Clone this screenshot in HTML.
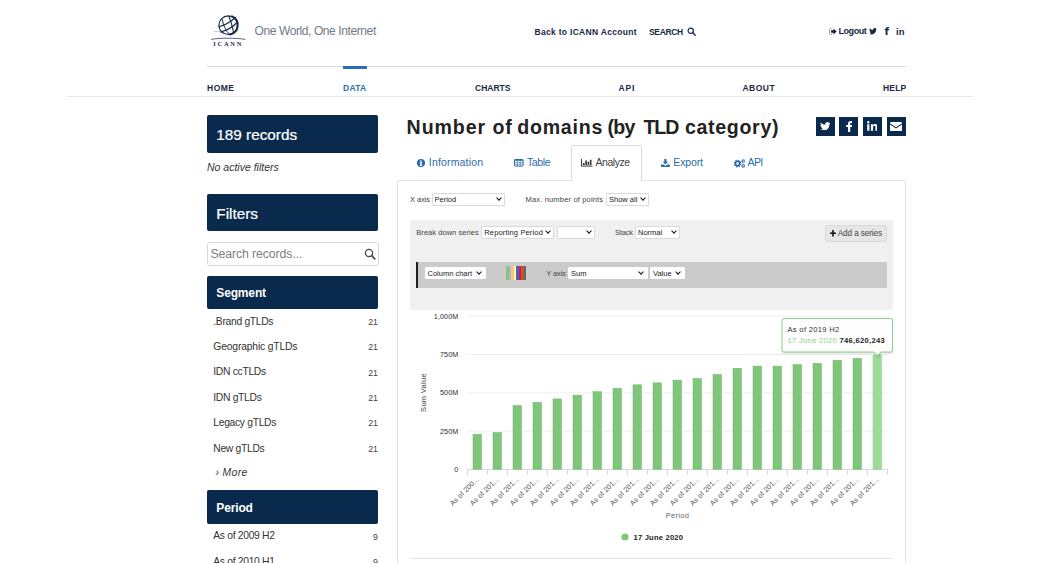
<!DOCTYPE html>
<html lang="en">
<head>
<meta charset="utf-8">
<title>Number of domains (by TLD category)</title>
<style>
*{box-sizing:border-box;margin:0;padding:0}
html,body{width:1040px;height:563px;overflow:hidden;background:#fff}
body{font-family:"Liberation Sans",sans-serif;color:#333;position:relative}
.abs{position:absolute;white-space:nowrap}
.line{position:absolute;height:1px;background:#dcdcdc}
.nav{position:absolute;top:83.2px;font-size:8.5px;font-weight:bold;letter-spacing:.9px;color:#1a2a44;line-height:10px;white-space:nowrap}
.top{position:absolute;top:26.5px;font-size:8.5px;font-weight:bold;color:#1a2a44;line-height:10px;white-space:nowrap;letter-spacing:.3px}
.box{position:absolute;left:207px;width:171.3px;background:#0a2a4d;color:#fff;border-radius:2px;white-space:nowrap}
.box span{position:absolute;left:9.3px}
.li{position:absolute;left:213.3px;letter-spacing:-.3px;font-size:10.3px;color:#333;line-height:12px;white-space:nowrap}
.ct{position:absolute;right:662.5px;font-size:8.8px;letter-spacing:-.3px;color:#444;line-height:10px;text-align:right}
.tab{position:absolute;top:155.8px;font-size:10.5px;color:#2a6bb0;line-height:13px;white-space:nowrap}
.lbl{position:absolute;font-size:7.5px;color:#444;line-height:9px;white-space:nowrap}
.sel{position:absolute;height:12.5px;background:#fff;border:1px solid #dadada;border-radius:1px;font-size:7.5px;line-height:11.2px;color:#222;padding-left:2px;white-space:nowrap;overflow:hidden}
.sel:after{content:"";position:absolute;right:3.2px;top:2.2px;width:3px;height:3px;border-right:1.6px solid #111;border-bottom:1.6px solid #111;transform:rotate(45deg)}
.sq{position:absolute;top:116.8px;width:18.8px;height:18.8px;background:#0a2a4d}
</style>
</head>
<body>
<!-- HEADER -->
<div id="logo" class="abs" style="left:205px;top:8px;width:50px;height:45px">
<svg width="50" height="45" viewBox="0 0 50 45">
<g fill="none" stroke="#1b2b50" stroke-linecap="round">
<circle cx="23.2" cy="17.2" r="9.3" stroke-width="1.2"/>
<path d="M27 8.300A9.600 9.600 0 0 1 25 26.500" stroke-width="2"/>
<path d="M13.800 18.800C19 17.500 26 13.500 30.500 9.500" stroke-width="1.100"/>
<path d="M15.500 24C21 22.500 28 19 32 14.500" stroke-width="1.200"/>
<path d="M17.300 11.500C17.800 16 20.500 22.500 24.500 26.500" stroke-width="1"/>
<path d="M23.800 8.500C25.500 12 27.500 19 28.600 24.800" stroke-width="1.100"/>
<path d="M9.500 23.500C11.500 23.800 13.500 23.500 15 23" stroke-width=".8" stroke-opacity=".35"/>
<path d="M6.500 31.300C15 29.800 31 29.800 40 31.300" stroke-width=".9" stroke-opacity=".8"/>
</g>
<text x="23.200" y="37.500" text-anchor="middle" font-family="Liberation Serif,serif" font-weight="bold" font-size="6.4" letter-spacing="1.75" fill="#1b2b50">ICANN</text>
</svg>
</div>
<div class="abs" id="tag" style="left:254.5px;top:23.3px;font-size:12px;line-height:16px;color:#737a85;letter-spacing:-.4px">One World, One Internet</div>
<div class="top" style="left:534.5px">Back to ICANN Account</div>
<div class="top" style="left:649px;letter-spacing:-.35px">SEARCH</div>
<svg class="abs" style="left:687px;top:27.300px" width="9.300" height="9.300" viewBox="0 0 10 10"><circle cx="4" cy="4" r="2.8" fill="none" stroke="#1a2a44" stroke-width="1.3"/><path d="M6 6 L8.8 8.8" stroke="#1a2a44" stroke-width="1.5" stroke-linecap="round"/></svg>
<svg class="abs" style="left:828.500px;top:27.600px" width="8" height="7" viewBox="0 0 8 6.500" preserveAspectRatio="none"><path d="M2.800 .6H1.500Q.5 .6 .5 1.600V4.900Q.5 5.900 1.500 5.900H2.800" fill="none" stroke="#8f97a6" stroke-width=".9"/><path d="M2.100 2.200H4.500V.5L7.700 3.250L4.500 6V4.300H2.100Z" fill="#14233f"/></svg>
<div class="top" style="left:838.5px;top:25.500px;font-size:9px;letter-spacing:-.44px">Logout</div>
<svg class="abs" style="left:869px;top:28px" width="8" height="6.600" viewBox="0 0 24 20"><path fill="#1a2a44" d="M24 2.4c-.9.4-1.8.7-2.8.8 1-.6 1.8-1.600 2.200-2.700-1 .6-2 1-3.100 1.200C19.400.7 18.100.1 16.700.1c-2.700 0-4.900 2.200-4.900 4.900 0 .4 0 .8.1 1.100C7.700 5.900 4.100 3.900 1.700.9c-.4.700-.7 1.600-.7 2.500 0 1.700.9 3.200 2.200 4.100-.8 0-1.600-.2-2.200-.6v.1c0 2.400 1.700 4.400 3.900 4.800-.4.100-.8.200-1.300.2-.3 0-.6 0-.9-.1.600 2 2.400 3.400 4.600 3.400-1.700 1.300-3.800 2.100-6.100 2.100-.4 0-.8 0-1.200-.1 2.200 1.400 4.800 2.200 7.500 2.200 9.100 0 14-7.500 14-14v-.6c1-.7 1.800-1.600 2.500-2.500z"/></svg>
<div class="top" style="left:884.5px;top:26px;font-size:10.5px;font-family:'DejaVu Sans',sans-serif">f</div>
<div class="top" style="left:896px;font-size:9.5px;letter-spacing:0;top:26.500px">in</div>

<div class="line" style="left:207px;top:66px;width:699px"></div>
<div class="abs" style="left:343px;top:66px;width:24px;height:3px;background:#2a6ebb"></div>
<div class="nav" style="left:207px;letter-spacing:.5px">HOME</div>
<div class="nav" style="left:343px;color:#2a6ebb;letter-spacing:.3px">DATA</div>
<div class="nav" style="left:475px;letter-spacing:0">CHARTS</div>
<div class="nav" style="left:618.5px;letter-spacing:.8px">API</div>
<div class="nav" style="left:742.5px;letter-spacing:.47px">ABOUT</div>
<div class="nav" style="left:883px;letter-spacing:.2px">HELP</div>
<div class="line" style="left:67px;top:96px;width:906px;background:#e6e6e6"></div>

<!-- SIDEBAR -->
<div class="box" style="top:115.4px;height:37.400px;font-size:15.3px;line-height:39.500px;-webkit-text-stroke:.22px #fff"><span>189 records</span></div>
<div class="abs" style="left:207px;top:160.700px;font-size:10.5px;line-height:12px;font-style:italic;color:#333">No active filters</div>
<div class="box" style="top:194.100px;height:37.400px;font-size:15.3px;line-height:39.500px;-webkit-text-stroke:.22px #fff"><span>Filters</span></div>
<div class="abs" style="left:207px;top:242px;width:171.500px;height:24px;letter-spacing:-.12px;border:1px solid #d8d8d8;border-radius:3px;font-size:12.3px;line-height:23.500px;color:#808080;padding-left:2.500px">Search records...</div>
<svg class="abs" style="left:364px;top:248px" width="12" height="12" viewBox="0 0 12 12"><circle cx="5" cy="5" r="3.600" fill="none" stroke="#4a4a4a" stroke-width="1.300"/><path d="M7.700 7.700 L10.800 10.800" stroke="#4a4a4a" stroke-width="1.700" stroke-linecap="round"/></svg>
<div class="box" style="top:275.600px;height:33.500px;font-size:12px;line-height:35.300px;font-weight:bold;letter-spacing:-.15px"><span>Segment</span></div>
<div class="li" style="top:315.5px">.Brand gTLDs</div><div class="ct" style="top:316.8px">21</div>
<div class="li" style="top:340.9px;letter-spacing:-.15px">Geographic gTLDs</div><div class="ct" style="top:342.2px">21</div>
<div class="li" style="top:366.3px">IDN ccTLDs</div><div class="ct" style="top:367.6px">21</div>
<div class="li" style="top:391.7px">IDN gTLDs</div><div class="ct" style="top:393.0px">21</div>
<div class="li" style="top:417.1px">Legacy gTLDs</div><div class="ct" style="top:418.4px">21</div>
<div class="li" style="top:442.5px">New gTLDs</div><div class="ct" style="top:443.8px">21</div>
<div class="li" style="left:215.5px;top:467.0px;font-style:italic;letter-spacing:.4px">› More</div>
<div class="box" style="top:490.3px;height:33.500px;font-size:12px;line-height:36.300px;font-weight:bold;letter-spacing:-.15px"><span>Period</span></div>
<div class="li" style="top:530.3px">As of 2009 H2</div><div class="ct" style="top:531.6px">9</div>
<div class="li" style="top:555.7px">As of 2010 H1</div><div class="ct" style="top:557.0px">9</div>

<!-- MAIN -->
<div class="abs" id="title" style="left:406.2px;top:113.3px;width:380px;height:28px;font-size:19.6px;line-height:28px;font-weight:bold;color:#222"><span class="abs" style="left:0.4px;letter-spacing:0.91px">Number </span><span class="abs" style="left:86.4px;letter-spacing:0.69px">of </span><span class="abs" style="left:111.0px;letter-spacing:0.76px">domains </span><span class="abs" style="left:201.4px;letter-spacing:-.8px">(by </span><span class="abs" style="left:237.3px;letter-spacing:-1.1px">TLD </span><span class="abs" style="left:278.7px;letter-spacing:0.68px">category) </span></div>
<div class="sq" style="left:815.800px"><svg class="abs" style="left:3.800px;top:4.800px" width="10.600" height="8.900" viewBox="0 0 24 20" preserveAspectRatio="none"><path fill="#fff" d="M24 2.4c-.9.4-1.800.7-2.800.8 1-.6 1.800-1.600 2.200-2.700-1 .6-2 1-3.100 1.200C19.400.7 18.100.1 16.700.1c-2.700 0-4.900 2.200-4.900 4.900 0 .4 0 .8.100 1.100C7.700 5.900 4.100 3.900 1.700.9c-.4.700-.7 1.600-.7 2.500 0 1.700.9 3.200 2.200 4.100-.8 0-1.600-.2-2.200-.6v.1c0 2.400 1.700 4.400 3.900 4.800-.4.100-.8.200-1.300.2-.3 0-.6 0-.9-.1.600 2 2.400 3.400 4.600 3.400-1.700 1.300-3.800 2.100-6.100 2.100-.4 0-.8 0-1.200-.1 2.200 1.400 4.800 2.200 7.500 2.200 9.100 0 14-7.500 14-14v-.6c1-.7 1.800-1.600 2.500-2.500z"/></svg></div>
<div class="sq" style="left:839.100px"><svg class="abs" style="left:6.500px;top:4px" width="6.500" height="11" viewBox="0 0 6.500 11"><path fill="#fff" d="M4.200 11V6.100h1.700l.3-2H4.200V2.900c0-.6.200-1 1-1h1.100V.1C6.100.1 5.400 0 4.700 0 3.100 0 2 1 2 2.700v1.400H.2v2H2V11z"/></svg></div>
<div class="sq" style="left:862.900px"><svg class="abs" style="left:3.800px;top:4.300px" width="10.600" height="9.700" viewBox="0 0 10.600 9.700"><path fill="#fff" d="M.2 3.200h2.200v6.500H.2zM1.300 0a1.250 1.250 0 1 1 0 2.500A1.250 1.250 0 0 1 1.300 0zM3.900 3.200H6v.9c.4-.7 1.200-1.100 2.200-1.100 2 0 2.400 1.300 2.400 3v3.700H8.400V6.400c0-.8 0-1.700-1.100-1.700S6.100 5.500 6.100 6.300v3.400H3.900z"/></svg></div>
<div class="sq" style="left:886.900px"><svg class="abs" style="left:3.400px;top:5.300px" width="12" height="9.200" viewBox="0 0 12 9.200"><path fill="#fff" d="M1 0h10a1 1 0 0 1 1 1v.3L6 5.200 0 1.300V1a1 1 0 0 1 1-1zM0 2.600l6 3.900 6-3.900v5.600a1 1 0 0 1-1 1H1a1 1 0 0 1-1-1z"/></svg></div>

<!-- tabs -->
<div class="abs" style="left:397px;top:179.500px;width:509px;height:400px;border:1px solid #e1e1e1;border-radius:2px"></div>
<div class="abs" style="left:570.500px;top:145px;width:71px;height:36px;border:1px solid #dcdcdc;border-bottom:0;background:#fff;border-radius:2px 2px 0 0"></div>
<svg class="abs" style="left:417px;top:158.800px" width="8" height="8" viewBox="0 0 8 8"><circle cx="4" cy="4" r="4" fill="#2a6bb0"/><rect x="3.300" y="3.300" width="1.500" height="3.200" fill="#fff"/><rect x="2.800" y="3.300" width="1.500" height=".8" fill="#fff"/><rect x="2.700" y="5.900" width="2.700" height=".8" fill="#fff"/><circle cx="4" cy="2" r=".85" fill="#fff"/></svg>
<div class="tab" style="left:428.800px;letter-spacing:.17px">Information</div>
<svg class="abs" style="left:514.300px;top:159.300px" width="9.600" height="7.600" viewBox="0 0 9.600 7.600"><rect x=".5" y=".5" width="8.600" height="6.600" rx=".6" fill="none" stroke="#2a6bb0" stroke-width="1"/><rect x=".5" y=".5" width="8.600" height="1.300" fill="#2a6bb0"/><path d="M.5 3.600H9.100M.5 5.300H9.100" stroke="#2a6bb0" stroke-width=".55" fill="none"/><path d="M3.400 1.500V7M6.200 1.500V7" stroke="#2a6bb0" stroke-width=".6" fill="none"/></svg>
<div class="tab" style="left:527px;letter-spacing:-.4px">Table</div>
<svg class="abs" style="left:581.300px;top:159.200px" width="11.400" height="7.600" viewBox="0 0 11.400 7.600"><path d="M.5 0V7.100H11.400" fill="none" stroke="#333" stroke-width="1"/><path d="M2 6.100V3.900H3.600V6.100zM4.300 6.100V1.400H5.900V6.100zM6.600 6.100V2.800H8.200V6.100zM8.900 6.100V.7H10.500V6.100z" fill="#333"/></svg>
<div class="tab" style="left:595.500px;color:#444;letter-spacing:-.45px">Analyze</div>
<svg class="abs" style="left:661.300px;top:158.800px" width="8.800" height="8" viewBox="0 0 8.800 8"><path d="M3.300 0H5.500V2.800H7.100L4.400 5.600 1.700 2.800H3.300zM0 5.400H2.400L4.400 7 6.400 5.400H8.800V8H0z" fill="#2a6bb0"/></svg>
<div class="tab" style="left:673.300px;letter-spacing:-.15px">Export</div>
<svg class="abs" style="left:733.500px;top:158.500px" width="11.500" height="9" viewBox="0 0 11.500 9"><g fill="none" stroke="#2a6bb0"><circle cx="3.600" cy="4.600" r="2.200" stroke-width="1.700"/><circle cx="3.600" cy="4.600" r="3.300" stroke-width="1.200" stroke-dasharray="1.300 1.290"/><circle cx="9.300" cy="2.100" r="1.100" stroke-width="1"/><circle cx="9.300" cy="2.100" r="1.800" stroke-width=".7" stroke-dasharray=".8 .61"/><circle cx="9.300" cy="6.900" r="1.100" stroke-width="1"/><circle cx="9.300" cy="6.900" r="1.800" stroke-width=".7" stroke-dasharray=".8 .61"/></g></svg>
<div class="tab" style="left:747.500px;letter-spacing:-.6px">API</div>

<!-- controls -->
<div class="lbl" style="left:410px;top:194.500px;letter-spacing:-.1px">X axis</div>
<div class="sel" style="left:431.500px;top:193px;width:73.500px">Period</div>
<div class="lbl" style="left:525.500px;top:194.500px;letter-spacing:.17px">Max. number of points</div>
<div class="sel" style="left:606px;top:193px;width:43px">Show all</div>

<div class="abs" style="left:410px;top:220px;width:483px;height:90px;background:#f0f0f0"></div>
<div class="lbl" style="left:416.300px;top:227.800px;letter-spacing:.04px">Break down series</div>
<div class="sel" style="left:481.300px;top:226px;width:73.200px;letter-spacing:.15px">Reporting Period</div>
<div class="sel" style="left:557px;top:226px;width:38px"></div>
<div class="lbl" style="left:615px;top:227.800px;letter-spacing:-.2px">Stack</div>
<div class="sel" style="left:635px;top:226px;width:45px">Normal</div>
<div class="abs" style="left:824.500px;top:225px;width:62.500px;height:16.500px;background:#e6e6e6;border:1px solid #d9d9d9;border-radius:2px"></div>
<svg class="abs" style="left:829.500px;top:230.300px" width="6" height="6.500" viewBox="0 0 6 6.500"><path d="M3 0V6.500M0 3.250H6" stroke="#111" stroke-width="1.600" fill="none"/></svg>
<div class="abs" id="addser" style="left:837.700px;top:229px;font-size:8.2px;line-height:10px;color:#444;letter-spacing:-.1px">Add a series</div>

<div class="abs" style="left:415.500px;top:262px;width:471.500px;height:25.500px;background:#cbcbcb;border-left:2.500px solid #222"></div>
<div class="sel" style="left:424.500px;top:266.800px;width:61px;border-color:#fff">Column chart</div>
<div class="abs" style="left:506px;top:266.200px;width:20px;height:13.800px;display:flex">
<i style="flex:1;background:#7fc97f"></i><i style="flex:1;background:#beaed4"></i><i style="flex:1;background:#fdc086"></i><i style="flex:1;background:#ffff99"></i><i style="flex:1;background:#386cb0"></i><i style="flex:1;background:#f0027f"></i><i style="flex:1;background:#bf5b17"></i><i style="flex:1;background:#666666"></i>
</div>
<div class="lbl" style="left:546.300px;top:268.600px;letter-spacing:-.1px">Y axis</div>
<div class="sel" style="left:568px;top:266.800px;width:79.500px;border-color:#fff">Sum</div>
<div class="sel" style="left:650px;top:266.800px;width:34.500px;border-color:#fff">Value</div>

<!-- CHART -->
<svg class="abs" id="chart" style="left:410px;top:310px" width="483" height="253" viewBox="0 0 483 253" font-family="Liberation Sans,sans-serif">
<text x="48.5" y="162.2" text-anchor="end" font-size="7.2" fill="#2a2a2a" letter-spacing=".15">0</text>
<path d="M57 121.2H477" stroke="#eeeeee" stroke-width="1"/>
<text x="48.5" y="123.8" text-anchor="end" font-size="7.2" fill="#2a2a2a" letter-spacing=".15">250M</text>
<path d="M57 82.8H477" stroke="#eeeeee" stroke-width="1"/>
<text x="48.5" y="85.4" text-anchor="end" font-size="7.2" fill="#2a2a2a" letter-spacing=".15">500M</text>
<path d="M57 44.4H477" stroke="#eeeeee" stroke-width="1"/>
<text x="48.5" y="47.0" text-anchor="end" font-size="7.2" fill="#2a2a2a" letter-spacing=".15">750M</text>
<path d="M57 6.0H477" stroke="#eeeeee" stroke-width="1"/>
<text x="48.5" y="8.6" text-anchor="end" font-size="7.2" fill="#2a2a2a" letter-spacing=".15">1,000M</text>
<path d="M57 159.5H477" stroke="#d3d9e8" stroke-width="1"/>
<path d="M57.5 159v6M77.5 159v6M97.5 159v6M117.5 159v6M137.5 159v6M157.5 159v6M177.5 159v6M197.5 159v6M217.5 159v6M237.5 159v6M257.5 159v6M277.5 159v6M297.5 159v6M317.5 159v6M337.5 159v6M357.5 159v6M377.5 159v6M397.5 159v6M417.5 159v6M437.5 159v6M457.5 159v6M477.5 159v6" stroke="#d3d9e8" stroke-width="1" fill="none"/>
<rect x="63.00" y="124.3" width="8.5" height="35.0" fill="#7fc67a" stroke="#72b96d" stroke-width=".5"/>
<rect x="83.00" y="122.4" width="8.5" height="36.9" fill="#7fc67a" stroke="#72b96d" stroke-width=".5"/>
<rect x="103.00" y="95.5" width="8.5" height="63.8" fill="#7fc67a" stroke="#72b96d" stroke-width=".5"/>
<rect x="123.00" y="92.4" width="8.5" height="66.9" fill="#7fc67a" stroke="#72b96d" stroke-width=".5"/>
<rect x="143.00" y="88.9" width="8.5" height="70.4" fill="#7fc67a" stroke="#72b96d" stroke-width=".5"/>
<rect x="163.00" y="85.1" width="8.5" height="74.2" fill="#7fc67a" stroke="#72b96d" stroke-width=".5"/>
<rect x="183.00" y="81.6" width="8.5" height="77.7" fill="#7fc67a" stroke="#72b96d" stroke-width=".5"/>
<rect x="203.00" y="78.3" width="8.5" height="81.0" fill="#7fc67a" stroke="#72b96d" stroke-width=".5"/>
<rect x="223.00" y="74.8" width="8.5" height="84.5" fill="#7fc67a" stroke="#72b96d" stroke-width=".5"/>
<rect x="243.00" y="72.8" width="8.5" height="86.5" fill="#7fc67a" stroke="#72b96d" stroke-width=".5"/>
<rect x="263.00" y="70.1" width="8.5" height="89.2" fill="#7fc67a" stroke="#72b96d" stroke-width=".5"/>
<rect x="283.00" y="68.5" width="8.5" height="90.8" fill="#7fc67a" stroke="#72b96d" stroke-width=".5"/>
<rect x="303.00" y="64.4" width="8.5" height="94.9" fill="#7fc67a" stroke="#72b96d" stroke-width=".5"/>
<rect x="323.00" y="58.3" width="8.5" height="101.0" fill="#7fc67a" stroke="#72b96d" stroke-width=".5"/>
<rect x="343.00" y="56.1" width="8.5" height="103.2" fill="#7fc67a" stroke="#72b96d" stroke-width=".5"/>
<rect x="363.00" y="56.1" width="8.5" height="103.2" fill="#7fc67a" stroke="#72b96d" stroke-width=".5"/>
<rect x="383.00" y="54.5" width="8.5" height="104.8" fill="#7fc67a" stroke="#72b96d" stroke-width=".5"/>
<rect x="403.00" y="53.3" width="8.5" height="106.0" fill="#7fc67a" stroke="#72b96d" stroke-width=".5"/>
<rect x="423.00" y="50.2" width="8.5" height="109.1" fill="#7fc67a" stroke="#72b96d" stroke-width=".5"/>
<rect x="443.00" y="48.3" width="8.5" height="111.0" fill="#7fc67a" stroke="#72b96d" stroke-width=".5"/>
<rect x="463.00" y="44.9" width="8.5" height="114.4" fill="#9cdc97" stroke="#90d28b" stroke-width=".5"/>
<text transform="translate(69.30000000000001 169.7) rotate(-45)" text-anchor="end" font-size="7.2" fill="#5a5a5a" letter-spacing=".1">As of 200...</text>
<text transform="translate(89.30000000000001 169.7) rotate(-45)" text-anchor="end" font-size="7.2" fill="#5a5a5a" letter-spacing=".1">As of 201...</text>
<text transform="translate(109.29999999999995 169.7) rotate(-45)" text-anchor="end" font-size="7.2" fill="#5a5a5a" letter-spacing=".1">As of 201...</text>
<text transform="translate(129.29999999999995 169.7) rotate(-45)" text-anchor="end" font-size="7.2" fill="#5a5a5a" letter-spacing=".1">As of 201...</text>
<text transform="translate(149.29999999999995 169.7) rotate(-45)" text-anchor="end" font-size="7.2" fill="#5a5a5a" letter-spacing=".1">As of 201...</text>
<text transform="translate(169.29999999999995 169.7) rotate(-45)" text-anchor="end" font-size="7.2" fill="#5a5a5a" letter-spacing=".1">As of 201...</text>
<text transform="translate(189.29999999999995 169.7) rotate(-45)" text-anchor="end" font-size="7.2" fill="#5a5a5a" letter-spacing=".1">As of 201...</text>
<text transform="translate(209.29999999999995 169.7) rotate(-45)" text-anchor="end" font-size="7.2" fill="#5a5a5a" letter-spacing=".1">As of 201...</text>
<text transform="translate(229.29999999999995 169.7) rotate(-45)" text-anchor="end" font-size="7.2" fill="#5a5a5a" letter-spacing=".1">As of 201...</text>
<text transform="translate(249.29999999999995 169.7) rotate(-45)" text-anchor="end" font-size="7.2" fill="#5a5a5a" letter-spacing=".1">As of 201...</text>
<text transform="translate(269.29999999999995 169.7) rotate(-45)" text-anchor="end" font-size="7.2" fill="#5a5a5a" letter-spacing=".1">As of 201...</text>
<text transform="translate(289.29999999999995 169.7) rotate(-45)" text-anchor="end" font-size="7.2" fill="#5a5a5a" letter-spacing=".1">As of 201...</text>
<text transform="translate(309.29999999999995 169.7) rotate(-45)" text-anchor="end" font-size="7.2" fill="#5a5a5a" letter-spacing=".1">As of 201...</text>
<text transform="translate(329.29999999999995 169.7) rotate(-45)" text-anchor="end" font-size="7.2" fill="#5a5a5a" letter-spacing=".1">As of 201...</text>
<text transform="translate(349.29999999999995 169.7) rotate(-45)" text-anchor="end" font-size="7.2" fill="#5a5a5a" letter-spacing=".1">As of 201...</text>
<text transform="translate(369.29999999999995 169.7) rotate(-45)" text-anchor="end" font-size="7.2" fill="#5a5a5a" letter-spacing=".1">As of 201...</text>
<text transform="translate(389.29999999999995 169.7) rotate(-45)" text-anchor="end" font-size="7.2" fill="#5a5a5a" letter-spacing=".1">As of 201...</text>
<text transform="translate(409.29999999999995 169.7) rotate(-45)" text-anchor="end" font-size="7.2" fill="#5a5a5a" letter-spacing=".1">As of 201...</text>
<text transform="translate(429.29999999999995 169.7) rotate(-45)" text-anchor="end" font-size="7.2" fill="#5a5a5a" letter-spacing=".1">As of 201...</text>
<text transform="translate(449.29999999999995 169.7) rotate(-45)" text-anchor="end" font-size="7.2" fill="#5a5a5a" letter-spacing=".1">As of 201...</text>
<text transform="translate(469.29999999999995 169.7) rotate(-45)" text-anchor="end" font-size="7.2" fill="#5a5a5a" letter-spacing=".1">As of 201...</text>
<text x="267.5" y="207.60000000000002" text-anchor="middle" font-size="7.5" fill="#666" letter-spacing=".3">Period</text>
<text transform="translate(16 82.5) rotate(-90)" text-anchor="middle" font-size="7.5" fill="#444" letter-spacing=".3">Sum Value</text>
<circle cx="215" cy="227" r="3.6" fill="#7fc67a"/>
<text x="223.5" y="230.20000000000005" font-size="7.6" font-weight="bold" fill="#222" letter-spacing=".2">17 June 2020</text>
<path d="M374 8.5H480.5a2 2 0 0 1 2 2V40a2 2 0 0 1 -2 2H470.9L467.4 45.5L463.9 42H374a2 2 0 0 1 -2 -2V10.5a2 2 0 0 1 2 -2Z" fill="#000" fill-opacity=".07" stroke="#000" stroke-opacity=".06" stroke-width="3" transform="translate(1 1)"/>
<path d="M374 8.5H480.5a2 2 0 0 1 2 2V40a2 2 0 0 1 -2 2H470.9L467.4 45.5L463.9 42H374a2 2 0 0 1 -2 -2V10.5a2 2 0 0 1 2 -2Z" fill="#fff" fill-opacity=".92" stroke="#8fce8a" stroke-width="1"/>
<text x="377.5" y="21.69999999999999" font-size="7.6" fill="#333" letter-spacing=".3">As of 2019 H2</text>
<text x="377.5" y="33.19999999999999" font-size="7.6" fill="#8fce8a" letter-spacing=".3">17 June 2020 <tspan fill="#222" font-weight="bold">746,620,243</tspan></text>
</svg>
<div class="line" style="left:410px;top:558px;width:483px;background:#e3e3e8"></div>
</body>
</html>
